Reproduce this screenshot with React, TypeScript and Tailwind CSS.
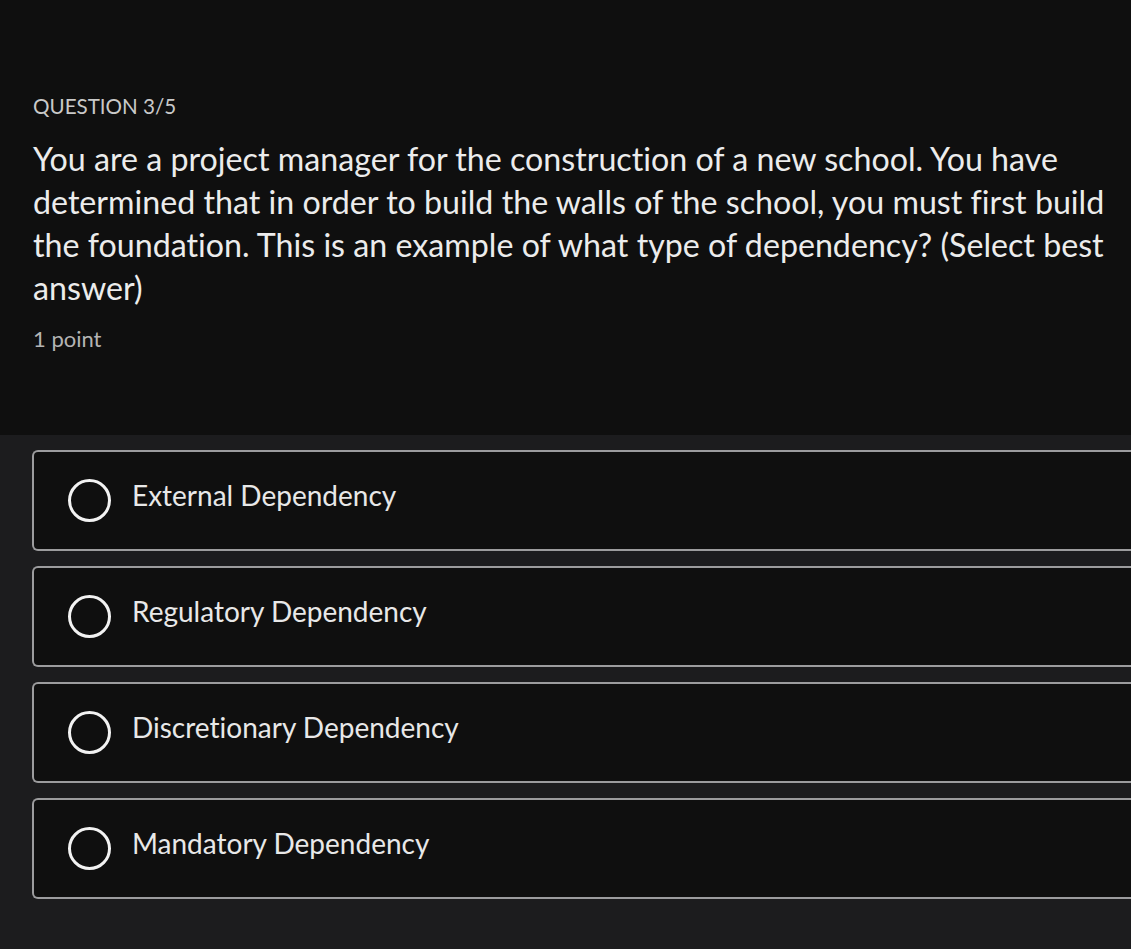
const options = [
  'External Dependency',
  'Regulatory Dependency',
  'Discretionary Dependency',
  'Mandatory Dependency',
];

const lines = [
  'You are a project manager for the construction of a new school. You have',
  'determined that in order to build the walls of the school, you must first build',
  'the foundation. This is an example of what type of dependency? (Select best',
  'answer)',
];

export default function App() {
  return (
    <div className="min-h-screen w-full overflow-hidden bg-[#1c1c1e] font-['Lato','Noto_Sans',sans-serif] [font-variant-ligatures:none]">
      {/* question header */}
      <div className="bg-[#0f0f0f] pt-[92px] pb-[82px] pl-[33px]">
        <div className="text-[20.6px] leading-[28px] text-[#c9c9c9]">QUESTION 3/5</div>
        <div className="mt-[17px] text-[32.2px] leading-[43px] text-[#ececec]">
          {lines.map((l) => (
            <div key={l} className="whitespace-nowrap">{l}</div>
          ))}
        </div>
        <div className="mt-[16px] text-[22px] leading-[28px] text-[#b4b4b4]">1 point</div>
      </div>

      {/* answers */}
      <div className="flex flex-col gap-[15px] pt-[15px] pb-[50px] pl-[32px]">
        {options.map((o) => (
          <div
            key={o}
            className="flex h-[101px] items-center gap-[21px] rounded-l-[6px] border-2 border-r-0 border-[#9c9c9e] bg-[#0f0f0f] pl-[34px]"
          >
            <span className="h-[43px] w-[43px] shrink-0 rounded-full border-[3px] border-[#f2f2f2]" />
            <span className="-mt-[12px] text-[28px] leading-[36px] text-[#e8e8e8]">{o}</span>
          </div>
        ))}
      </div>
    </div>
  );
}
